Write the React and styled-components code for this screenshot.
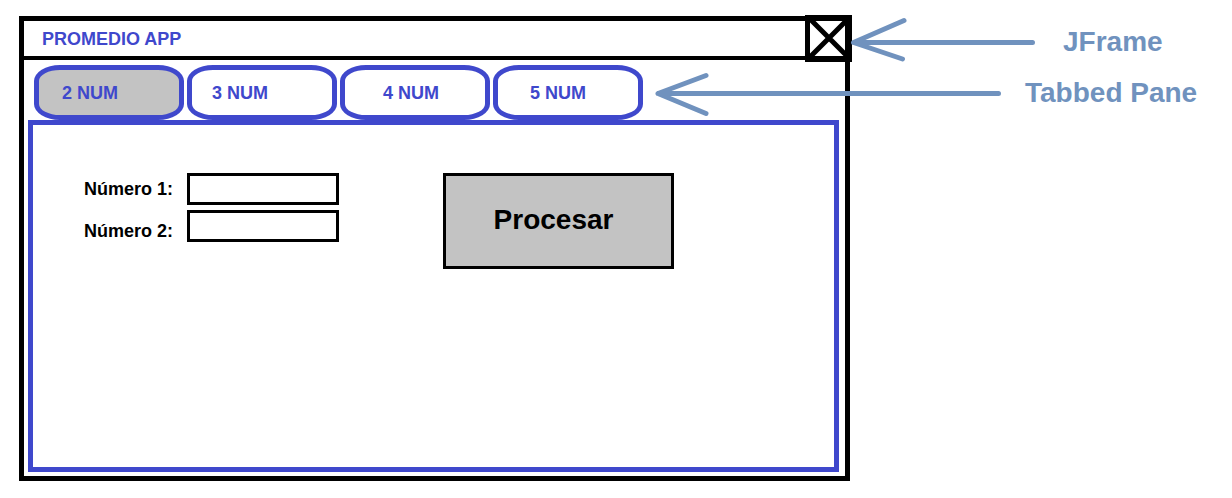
import React, { useState } from "react";
import styled, { createGlobalStyle, ThemeProvider } from "styled-components";

const theme = {
  ink: "#000000",
  blue: "#3f48cc",
  steel: "#7092be",
  grey: "#c3c3c3",
  paper: "#ffffff",
};

const GlobalStyle = createGlobalStyle`
  *, *::before, *::after { box-sizing: border-box; }
  body {
    margin: 0;
    background: ${theme.paper};
    font-family: "Liberation Sans", Arial, sans-serif;
    font-size: 18px;
    line-height: 20px;
    font-weight: bold;
  }
  button, input { font: inherit; margin: 0; }
`;

const Page = styled.main`
  display: grid;
  grid-template-columns: minmax(0, 1fr) 363px;
  align-items: start;
  padding: 16px 19px;
`;

const Frame = styled.section`
  border: 5px solid ${(p) => p.theme.ink};
  color: ${(p) => p.theme.ink};
`;

const TitleBar = styled.header`
  position: relative;
  display: flex;
  align-items: center;
  height: 39px;
  padding-left: 18px;
  border-bottom: 4px solid ${(p) => p.theme.ink};
`;

const Title = styled.h1`
  margin: 0;
  font-size: 18px;
  line-height: 20px;
  color: ${(p) => p.theme.blue};
`;

/* Sits over the corner of the frame, slightly larger than the title bar. */
const CloseButton = styled.button`
  position: absolute;
  top: -6px;
  right: -7px;
  width: 47px;
  height: 47px;
  padding: 0;
  border: solid ${(p) => p.theme.ink};
  border-width: 6px 7px 6px 5px;
  border-radius: 0;
  background: ${(p) => p.theme.paper};

  svg {
    display: block;
    width: 100%;
    height: 100%;
    stroke: ${(p) => p.theme.ink};
    stroke-width: 5;
  }
`;

const TabList = styled.div`
  display: flex;
  gap: 3px;
  padding: 5px 10px 0;
`;

const Tab = styled.button`
  width: 150px;
  height: 55px;
  padding: 0 0 0 ${(p) => p.$inset}px;
  border: 5px solid ${(p) => p.theme.blue};
  border-radius: 26px / 16px;
  background: ${(p) => (p.$active ? p.theme.grey : p.theme.paper)};
  color: ${(p) => p.theme.blue};
  text-align: left;
`;

const Panel = styled.form`
  display: flex;
  align-items: flex-start;
  min-height: 352px;
  margin: 0 6px 4px 4px;
  padding: 48px 51px;
  border: 5px solid ${(p) => p.theme.blue};
`;

const Labels = styled.div`
  display: flex;
  flex-direction: column;
  gap: 22px;
  width: 103px;
  padding-top: 6px;
  white-space: nowrap;
`;

const Fields = styled.div`
  display: flex;
  flex-direction: column;
  gap: 5px;
  margin-right: 104px;
`;

const Field = styled.input`
  width: 152px;
  height: 32px;
  padding: 0 6px;
  border: 3px solid ${(p) => p.theme.ink};
  border-radius: 0;
  background: ${(p) => p.theme.paper};
`;

const ProcessButton = styled.button`
  width: 231px;
  height: 96px;
  padding: 0 10px 2px 0;
  border: 3px solid ${(p) => p.theme.ink};
  border-radius: 0;
  background: ${(p) => p.theme.grey};
  color: ${(p) => p.theme.ink};
  font-size: 28px;
  line-height: 32px;
`;

const Notes = styled.aside`
  position: relative;
  display: flex;
  flex-direction: column;
  pointer-events: none;
`;

/* $reach is how far the arrow extends back over the frame. */
const Note = styled.div`
  display: flex;
  align-items: center;
  gap: 24px;
  margin-left: ${(p) => -p.$reach}px;
  color: ${(p) => p.theme.steel};
  font-size: 28px;
  line-height: 32px;
  white-space: nowrap;
`;

const ArrowSvg = styled.svg`
  flex: none;
  fill: none;
  stroke: currentColor;
  stroke-width: 5;
  stroke-linecap: round;
  stroke-linejoin: round;
`;

const Arrow = ({ width, d }) => (
  <ArrowSvg width={width} height="51" viewBox={`0 0 ${width} 51`} aria-hidden="true">
    <path d={d} />
  </ArrowSvg>
);

const tabs = [
  { count: 2, inset: 23 },
  { count: 3, inset: 20 },
  { count: 4, inset: 38 },
  { count: 5, inset: 32 },
];

export default function App() {
  const [active, setActive] = useState(2);
  const numbers = Array.from({ length: active }, (_, i) => i + 1);

  return (
    <ThemeProvider theme={theme}>
      <GlobalStyle />
      <Page>
        <Frame>
          <TitleBar>
            <Title>PROMEDIO APP</Title>
            <CloseButton type="button" aria-label="Cerrar">
              <svg viewBox="0 0 35 35">
                <path d="M0 -2L39 37M37 -1L-1 37" />
              </svg>
            </CloseButton>
          </TitleBar>
          <TabList role="tablist">
            {tabs.map(({ count, inset }) => (
              <Tab
                key={count}
                type="button"
                role="tab"
                aria-selected={active === count}
                $active={active === count}
                $inset={inset}
                onClick={() => setActive(count)}
              >
                {count} NUM
              </Tab>
            ))}
          </TabList>
          <Panel onSubmit={(e) => e.preventDefault()}>
            <Labels>
              {numbers.map((n) => (
                <label key={n} htmlFor={`numero-${n}`}>
                  Número {n}:
                </label>
              ))}
            </Labels>
            <Fields>
              {numbers.map((n) => (
                <Field key={n} id={`numero-${n}`} type="text" inputMode="decimal" />
              ))}
            </Fields>
            <ProcessButton type="submit">Procesar</ProcessButton>
          </Panel>
        </Frame>
        <Notes>
          <Note $reach={0}>
            <Arrow width={189} d="M182.5 26.5H3.5L54 4.5M3.5 26.5L52.5 43" />
            <span>JFrame</span>
          </Note>
          <Note $reach={195}>
            <Arrow width={346} d="M343.5 26.5H3L51 8.5M3 26.5L51 46.5" />
            <span>Tabbed Pane</span>
          </Note>
        </Notes>
      </Page>
    </ThemeProvider>
  );
}
